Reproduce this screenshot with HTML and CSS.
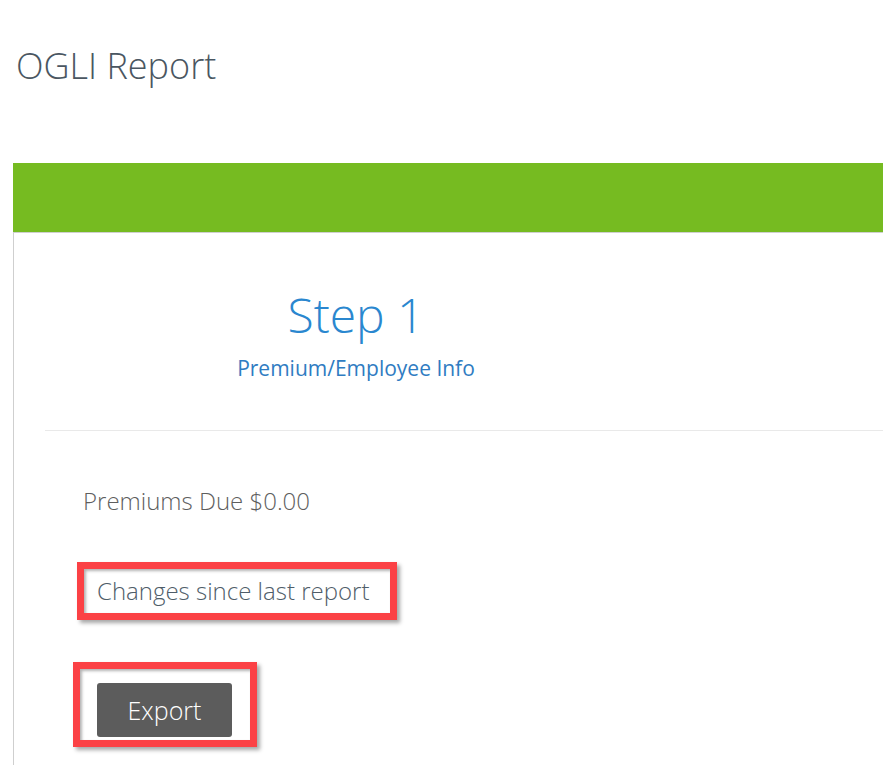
FILE: index.html
```html
<!DOCTYPE html>
<html>
<head>
<meta charset="utf-8">
<link rel="stylesheet" href="styles.css">
</head>
<body>
<div class="page">
  <h1 class="title">OGLI Report</h1>
  <div class="panel">
    <div class="panel-heading"></div>
    <div class="panel-body">
      <div class="step">
        <div class="step-num">Step 1</div>
        <div class="step-label">Premium/Employee Info</div>
      </div>
      <hr class="divider">
      <div class="content">
        <p class="premiums">Premiums Due $0.00</p>
        <div class="mark mark-changes">
          <span class="changes">Changes since last report</span>
        </div>
        <div class="mark mark-export">
          <button class="btn-export">Export</button>
        </div>
      </div>
    </div>
  </div>
</div>
</body>
</html>
```

FILE: styles.css
```css
html, body {
  margin: 0;
  padding: 0;
  background: #fff;
  overflow: hidden;
}
body {
  font-family: "Open Sans", "Liberation Sans", sans-serif;
  width: 883px;
  height: 765px;
}
.page {
  padding: 0 0 0 13px;
}
.title {
  margin: 0;
  padding: 42px 0 0 3px;
  height: 163px;
  box-sizing: border-box;
  font-size: 36px;
  font-weight: 300;
  color: #4a5661;
  line-height: 48px;
}
.panel {
  border-left: 1px solid #cfcfcf;
  min-height: 602px;
}
.panel-heading {
  height: 69px;
  background: #76bb21;
  border-bottom: 1px solid #cfcfcf;
  margin-left: -1px;
}
.panel-body {
  padding: 0 0 0 31px;
}
.step {
  width: 622px;
  text-align: center;
  padding-top: 52px;
  height: 142px;
  box-sizing: border-box;
}
.step-num {
  font-size: 48px;
  font-weight: 300;
  color: #2a87cf;
  line-height: 60px;
}
.step-label {
  font-size: 21px;
  color: #2f7cc2;
  line-height: 28px;
  margin-top: 9px;
}
.divider {
  margin: 55px 0 0 0;
  border: 0;
  border-top: 1px solid #e9e9e9;
  height: 0;
}
.content {
  padding-left: 38px;
}
.premiums {
  margin: 0;
  padding-top: 54px;
  font-size: 24px;
  font-weight: 300;
  color: #5e5e5e;
  line-height: 32px;
}
.mark {
  border: 7px solid #fb4145;
  box-shadow: 3px 3px 4px rgba(0, 0, 0, 0.35), inset 2px 2px 3px rgba(0, 0, 0, 0.3);
  background: #fff;
  display: inline-flex;
  box-sizing: border-box;
}
.mark-changes {
  margin-top: 45px;
  margin-left: -6px;
  width: 320px;
  height: 58px;
  align-items: center;
  padding-left: 13px;
}
.changes {
  font-size: 24px;
  font-weight: 300;
  color: #4f5d69;
  line-height: 30px;
}
.mark-export {
  display: flex;
  width: 184px;
  height: 85px;
  margin-top: 42px;
  margin-left: -10px;
  padding: 14px 0 0 17px;
}
.btn-export {
  width: 135px;
  height: 54px;
  background: #5c5c5c;
  color: #fff;
  border: 0;
  border-radius: 3px;
  font-family: "Open Sans", "Liberation Sans", sans-serif;
  font-size: 25px;
  font-weight: 300;
  padding: 0;
}
```
